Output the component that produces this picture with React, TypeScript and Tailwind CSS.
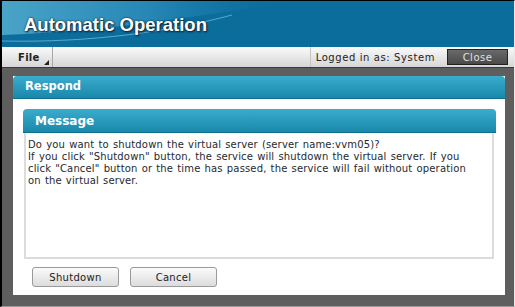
export default function App() {
  return (
    <div
      className="flex h-[307px] w-[515px] flex-col overflow-hidden border-b border-l-2 border-r border-t border-b-[#9a9a9a] border-l-black border-r-[#e8e8e8] border-t-black bg-[#5e5e5e]"
      style={{ fontFamily: '"DejaVu Sans", Verdana, sans-serif' }}
    >
      {/* title band */}
      <div className="relative h-[46px] shrink-0 overflow-hidden bg-[#0b6d9c]">
        <svg className="absolute inset-0" width="513" height="46" viewBox="0 0 513 46">
          <defs>
            <linearGradient id="sw" x1="0" y1="0" x2="1" y2="0">
              <stop offset="0" stopColor="#5fb6d6" />
              <stop offset="0.5" stopColor="#2e8fbd" />
              <stop offset="1" stopColor="#0b6d9c" stopOpacity="0" />
            </linearGradient>
          </defs>
          <path d="M0 0 H300 C220 10 120 30 0 34 Z" fill="url(#sw)" opacity="0.75" />
          <path d="M0 40 C90 42 170 30 230 14" stroke="#8fd0ea" strokeWidth="1" fill="none" opacity="0.6" />
        </svg>
        <div
          className="relative pl-[22px] pt-[12px] text-[18.5px] font-bold leading-[24px] text-white [text-shadow:0_0_2px_#123,1px_1px_2px_#123]"
          style={{ fontFamily: '"Liberation Sans", Arial, sans-serif' }}
        >
          Automatic Operation
        </div>
      </div>

      {/* menu bar */}
      <div className="flex h-[21px] shrink-0 items-stretch border-b border-[#3a3a3a] bg-gradient-to-b from-[#fafafa] to-[#d6d6d6]">
        <div className="relative flex w-[51px] items-center border-r border-[#a8a8a8] pl-[16px] text-[10px] font-bold tracking-[0.3px] text-[#222]">
          File
          <span className="absolute bottom-[2px] right-[3px] h-0 w-0 border-b-[5px] border-l-[5px] border-b-[#222] border-l-transparent" />
        </div>
        <div className="flex-1" />
        <div className="flex items-center border-l border-[#c4c4c4] pl-[5px] pr-[12px] text-[10px] tracking-[0.6px] text-[#222]">
          Logged in as: System
        </div>
        <div className="flex items-center pr-[6px]">
          <div className="flex h-[16px] w-[61px] items-center justify-center border border-[#222] bg-gradient-to-b from-[#6a6a6a] to-[#4a4a4a] text-[10px] tracking-[0.5px] text-[#e0e0e0]">
            Close
          </div>
        </div>
      </div>

      {/* work area */}
      <div className="flex-1 pb-[11px] pl-[11px] pr-[9px] pt-[8px]">
        <div className="flex h-full flex-col bg-white">
          <div className="flex h-[23px] shrink-0 items-center rounded-t-[4px] border-b border-[#0f6f8f] bg-gradient-to-b from-[#3aaccc] to-[#1888ab] pl-[12px] text-[11.5px] font-bold text-white">
            Respond
          </div>
          <div className="flex-1 pl-[10px] pr-[9px] pt-[10px]">
            <div className="flex h-[24px] items-center rounded-t-[4px] border-b border-[#0f6f8f] bg-gradient-to-b from-[#3aaccc] to-[#1888ab] pl-[12px] text-[12px] font-bold text-white">
              Message
            </div>
            <div className="ml-[1px] mr-[2px] h-[126px] border-2 border-t-0 border-[#dcdcdc] px-[2px] pt-[6px] text-[10px] leading-[12px] tracking-[0.15px] text-[#1e2a30] [word-spacing:0.8px]">
              <p>Do you want to shutdown the virtual server (server name:vvm05)?</p>
              <p>
                If you click "Shutdown" button, the service will shutdown the virtual server. If you
                <br />
                click "Cancel" button or the time has passed, the service will fail without operation
                <br />
                on the virtual server.
              </p>
            </div>
            <div className="mt-[8px] flex gap-[11px] pl-[9px]">
              <button className="h-[20px] w-[87px] rounded-[3px] border border-[#9a9a9a] bg-gradient-to-b from-[#fbfbfb] to-[#dcdcdc] text-[10px] tracking-[0.3px] text-[#222]">
                Shutdown
              </button>
              <button className="h-[20px] w-[87px] rounded-[3px] border border-[#9a9a9a] bg-gradient-to-b from-[#fbfbfb] to-[#dcdcdc] text-[10px] tracking-[0.3px] text-[#222]">
                Cancel
              </button>
            </div>
          </div>
        </div>
      </div>
    </div>
  )
}
